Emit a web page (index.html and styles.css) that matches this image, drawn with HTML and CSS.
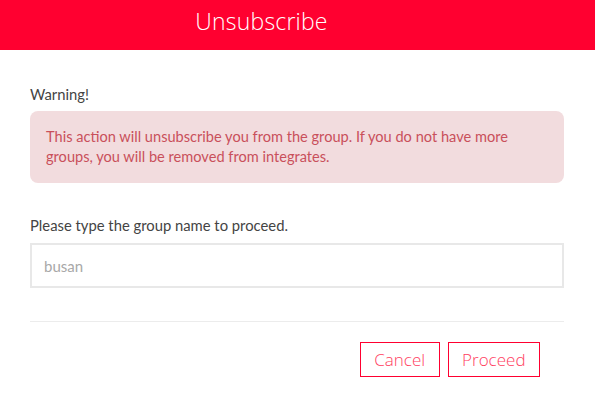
FILE: index.html
```html
<!DOCTYPE html>
<html>
<head>
<meta charset="utf-8">
<link rel="stylesheet" href="styles.css">
</head>
<body>
<div class="header"><h1 class="title">Unsubscribe</h1></div>
<div class="content">
  <p class="label warn">Warning!</p>
  <div class="alert">This action will unsubscribe you from the group. If you do not have more groups, you will be removed from integrates.</div>
  <p class="label prompt">Please type the group name to proceed.</p>
  <input class="field" type="text" placeholder="busan">
  <div class="divider"></div>
  <div class="actions">
    <button class="btn btn-cancel">Cancel</button>
    <button class="btn btn-proceed">Proceed</button>
  </div>
</div>
</body>
</html>
```
FILE: styles.css
```css
html, body {
  margin: 0;
  padding: 0;
  background: #fff;
}
body {
  font-family: "Lato", "Liberation Sans", sans-serif;
  color: #444;
}
.header {
  height: 50px;
  background: #ff0030;
  display: flex;
  align-items: center;
  justify-content: center;
  padding-right: 72px;
  box-sizing: border-box;
}
.title {
  margin: 0 0 8px 0;
  font-family: "Open Sans", sans-serif;
  font-weight: 300;
  font-size: 23px;
  letter-spacing: 0.2px;
  color: #fff;
  line-height: 30px;
}
.content {
  padding: 34px 31px 0 30px;
}
.label {
  margin: 0;
  font-size: 14.8px;
  line-height: 20px;
  color: #444;
}
.alert {
  margin-top: 7px;
  padding: 16px;
  background: #f2dcde;
  color: #c9505b;
  border-radius: 8px;
  font-size: 14.6px;
  line-height: 20px;
}
.prompt {
  margin-top: 32px;
}
.field {
  display: block;
  width: 100%;
  box-sizing: border-box;
  margin-top: 8px;
  height: 45px;
  border: 2px solid #e8e8e8;
  padding: 0 12px;
  font-family: "Lato", sans-serif;
  font-size: 15px;
  outline: none;
}
.field::placeholder {
  color: #a8a8a8;
}
.divider {
  margin-top: 33px;
  height: 1px;
  background: #ececec;
}
.actions {
  display: flex;
  justify-content: flex-end;
  gap: 8px;
  padding: 20px 24px 0 0;
}
.btn {
  height: 35px;
  background: #fff;
  border: 1px solid #ff0030;
  color: #ff3d5e;
  font-family: "Open Sans", sans-serif;
  font-weight: 300;
  font-size: 17px;
  padding: 0 13.5px;
}
```
